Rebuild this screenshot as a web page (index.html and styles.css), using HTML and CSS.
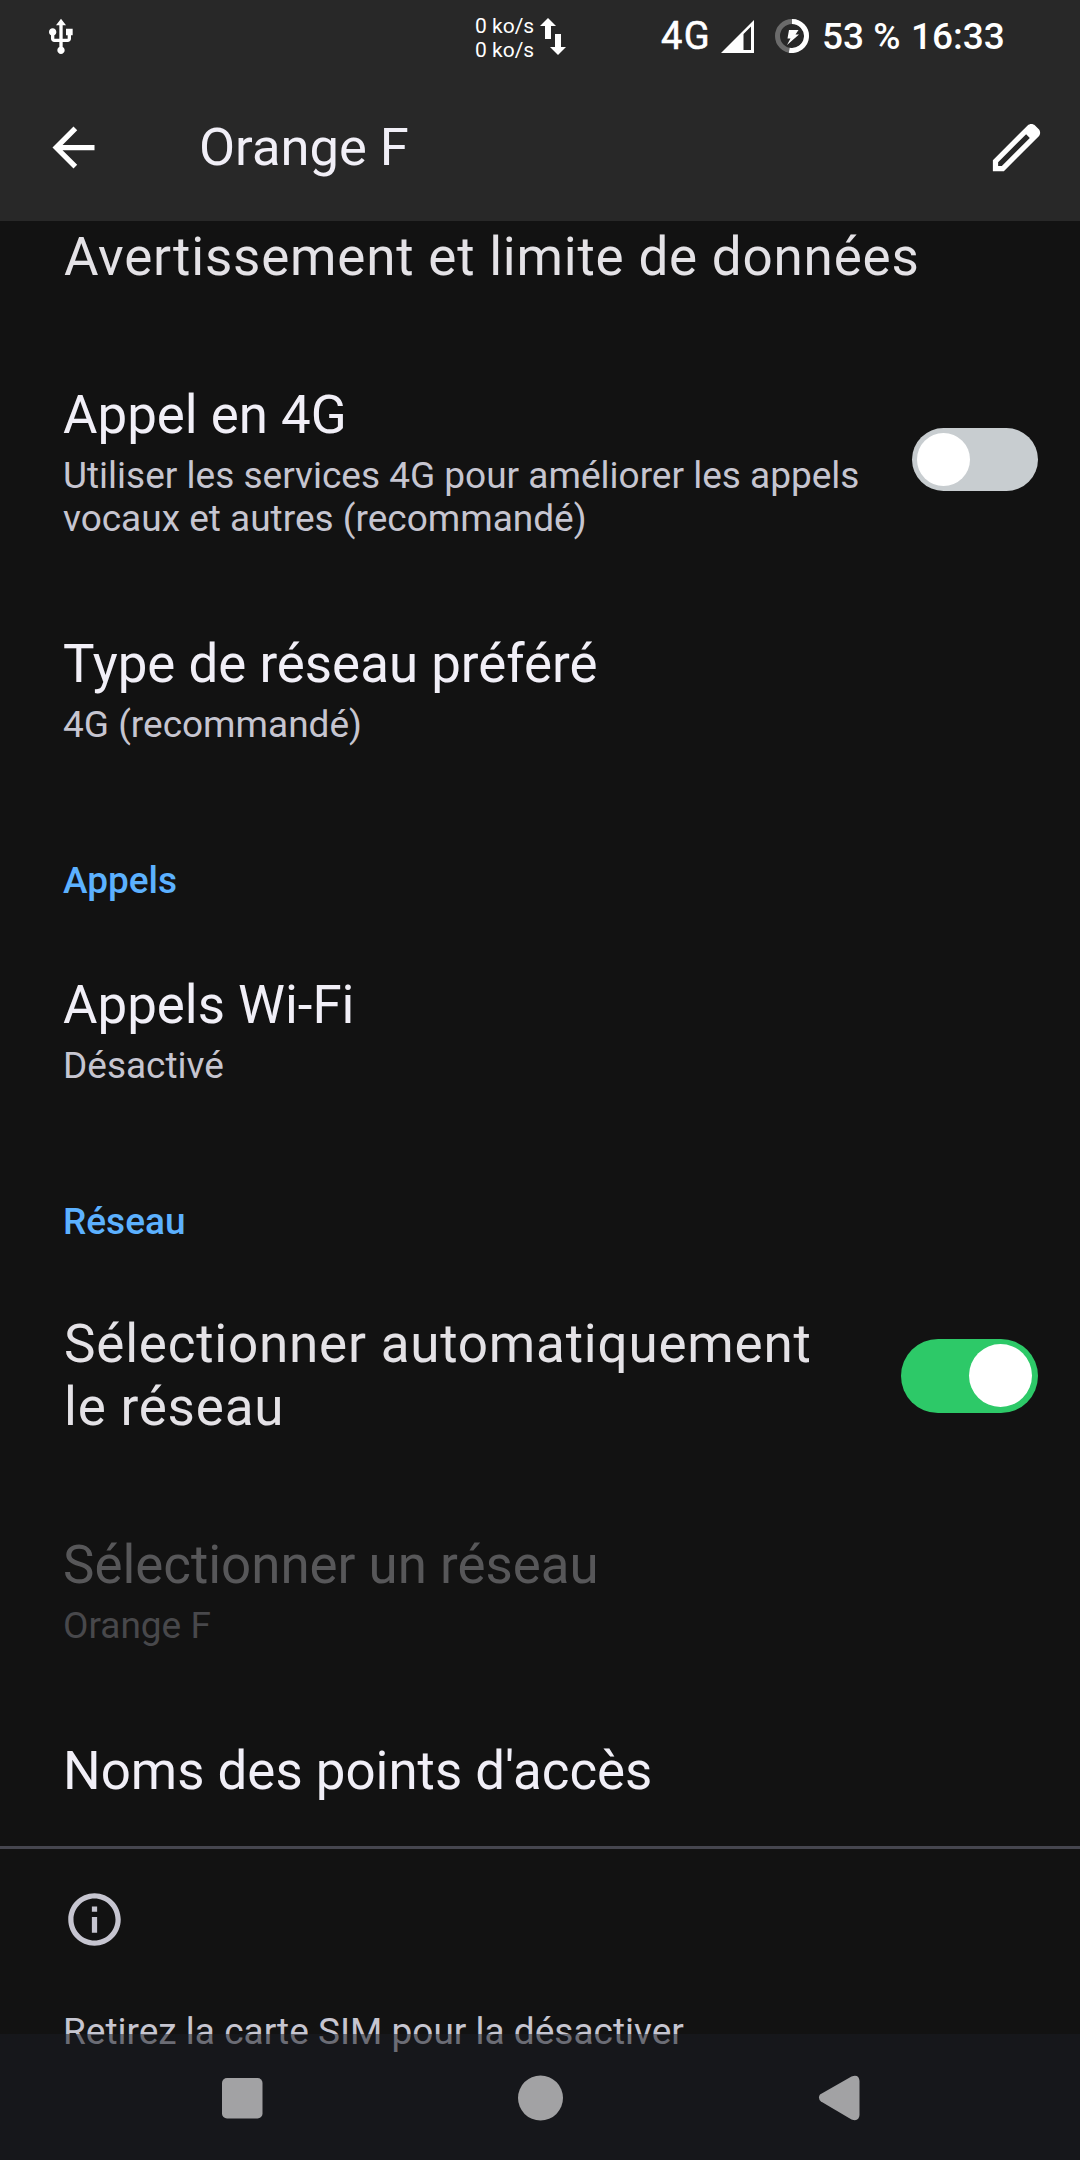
FILE: index.html
```html
<!DOCTYPE html>
<html lang="fr">
<head>
<meta charset="utf-8">
<title>Orange F</title>
<link rel="stylesheet" href="styles.css">
</head>
<body>
<div class="screen">
  <header class="header">
    <div class="status">
      <svg class="usb" viewBox="0 0 24 24"><path d="M15 7v4h1v2h-3V5h2l-3-4-3 4h2v8H8v-2.070c.7-.37 1.200-1.080 1.200-1.930 0-1.210-.99-2.200-2.200-2.200S4.800 7.790 4.800 9c0 .85.5 1.560 1.200 1.930V13c0 1.110.89 2 2 2h3v3.050c-.71.37-1.200 1.100-1.200 1.950 0 1.220.99 2.200 2.200 2.200s2.200-.98 2.200-2.200c0-.85-.49-1.580-1.200-1.950V15h3c1.110 0 2-.89 2-2v-2h1V7z"/></svg>
      <div class="traffic">
        <div class="rates"><span>0 ko/s</span><span>0 ko/s</span></div>
        <svg class="arrows" viewBox="0 0 26 37"><path d="M8 0l8 8h-5v13H5V8H0z"/><path d="M15 16h6v13h5l-8 8-8-8h5z"/></svg>
      </div>
      <span class="net">4G</span>
      <svg class="signal" viewBox="0 0 33 33"><path fill-rule="evenodd" d="M33 0v33H0zM22.500 14v16H30V6.500z"/></svg>
      <svg class="battery" viewBox="0 0 34 34"><circle cx="17" cy="17" r="14.500" fill="none" stroke="#6b6b6b" stroke-width="5"/><path d="M17 2.500a14.500 14.500 0 1 1-2.700 28.750" fill="none" stroke="#fff" stroke-width="5"/><path d="M14 11h9.500l-3 4.500h3.500L12 26l3.500-6.500h-3z"/></svg>
      <span class="percent">53 %</span>
      <span class="clock">16:33</span>
    </div>
    <div class="toolbar">
      <svg class="icon" viewBox="0 0 24 24"><path d="M20 11H7.830l5.590-5.590L12 4l-8 8 8 8 1.410-1.410L7.830 13H20z"/></svg>
      <h1 class="heading">Orange F</h1>
      <svg class="icon" viewBox="0 0 24 24"><path d="M20.410 4.940l-1.350-1.350c-.78-.78-2.050-.78-2.830 0L3 16.820V21h4.180L20.410 7.770c.79-.78.79-2.050 0-2.830zM6.410 19H5v-1.410L15.660 6.930l1.410 1.410z"/></svg>
    </div>
  </header>

  <main class="list">
    <div class="row row-first"><div class="text"><div class="title spaced">Avertissement et limite de données</div></div></div>
    <div class="row">
      <div class="text">
        <div class="title">Appel en 4G</div>
        <div class="summary">Utiliser les services 4G pour améliorer les appels vocaux et autres (recommandé)</div>
      </div>
      <div class="switch"><div class="knob"></div></div>
    </div>
    <div class="row"><div class="text"><div class="title">Type de réseau préféré</div><div class="summary">4G (recommandé)</div></div></div>
    <h2 class="category">Appels</h2>
    <div class="row"><div class="text"><div class="title">Appels Wi-Fi</div><div class="summary">Désactivé</div></div></div>
    <h2 class="category">Réseau</h2>
    <div class="row row-auto">
      <div class="text"><div class="title spaced">Sélectionner automatiquement le réseau</div></div>
      <div class="switch switch-on"><div class="knob"></div></div>
    </div>
    <div class="row disabled"><div class="text"><div class="title">Sélectionner un réseau</div><div class="summary">Orange F</div></div></div>
    <div class="row row-last"><div class="text"><div class="title">Noms des points d'accès</div></div></div>
    <div class="footer">
      <svg class="icon info" viewBox="0 0 24 24"><path d="M11 7h2v2h-2zm0 4h2v6h-2zm1-9C6.480 2 2 6.480 2 12s4.480 10 10 10 10-4.480 10-10S17.520 2 12 2zm0 18c-4.410 0-8-3.590-8-8s3.590-8 8-8 8 3.590 8 8-3.590 8-8 8z"/></svg>
      <div class="summary note">Retirez la carte SIM pour la désactiver</div>
    </div>
  </main>

  <nav class="nav">
    <svg viewBox="0 0 46 46"><rect x="3" y="3" width="40.500" height="40.500" rx="5"/></svg>
    <svg viewBox="0 0 46 46"><circle cx="22.500" cy="23" r="22.500"/></svg>
    <svg viewBox="0 0 46 46"><path d="M4 19.500L35.500 1.500Q43 -1 43.500 6V40Q43 47 35.500 44.500L5 26.500Q1.500 23 4 19.500z"/></svg>
  </nav>
</div>
</body>
</html>
```
FILE: styles.css
```css
* { box-sizing: border-box; margin: 0; }
body { background: #121212; font-family: Roboto, sans-serif; font-weight: 400; }
svg { display: block; flex: none; fill: #fff; }

.screen { position: relative; width: 1080px; height: 2160px; overflow: hidden; background: #121212; }

.header { height: 221px; background: #282828; color: #fff; }
.status { display: flex; align-items: flex-start; height: 74px; padding-left: 41px; font-size: 37px; font-weight: 500; line-height: 43px; white-space: nowrap; }
.usb { width: 40px; height: 40px; margin-top: 17px; }
.traffic { display: flex; width: 186px; margin-left: 394px; }
.rates { display: flex; flex-direction: column; width: 62px; padding-top: 14px; font-size: 21px; font-weight: 400; line-height: 24px; }
.arrows { width: 26px; height: 37px; margin: 18px 0 0 3px; }
.net { width: 60px; padding-top: 15px; font-size: 38px; font-weight: 400; letter-spacing: 1.5px; -webkit-text-stroke: 0.6px #fff; }
.signal { width: 33px; height: 33px; margin-top: 20px; }
.battery { width: 34px; height: 34px; margin: 19px 0 0 21px; }
.percent { width: 89px; margin-left: 13px; padding-top: 15px; }
.clock { padding-top: 15px; }

.toolbar { display: flex; align-items: flex-start; padding: 42px 32px 0 42px; }
.icon { width: 63px; height: 63px; }
.heading { flex: 1; margin-left: 94px; font-size: 52.5px; font-weight: 400; line-height: 62px; color: #f1eff7; }

.row { display: flex; align-items: center; justify-content: space-between; padding: 46px 42px 47px 63px; }
.row-first { padding: 5px 42px 50px 63px; }
.row-auto { padding-top: 44px; padding-bottom: 49px; }
.row-last { padding-bottom: 44px; }
.text { display: flex; flex-direction: column; gap: 8px; max-width: 807px; }
.row-first .text { max-width: none; }
.row-auto .text { max-width: 790px; }
.title { font-size: 52.85px; line-height: 62px; color: #f1eff7; }
.spaced { padding-left: 1px; font-size: 53px; letter-spacing: 0.78px; line-height: 63px; color: #e4e2e6; }
.row-first .spaced { line-height: 62px; }
.summary { font-size: 37px; line-height: 43px; color: #c6c5d0; }
.category { padding: 66px 63px 26px; font-size: 37px; font-weight: 500; line-height: 43px; color: #5cb1ff; }
.disabled .title { color: #575759; }
.disabled .summary { color: #48484b; }

.switch { display: flex; flex: none; width: 126px; height: 63px; margin-bottom: 6px; padding: 5px; border-radius: 32px; background: #c8cdd0; }
.knob { width: 53px; height: 53px; border-radius: 50%; background: #fff; }
.switch-on { justify-content: flex-end; width: 137px; height: 74px; margin-bottom: 0; padding: 5px 6px; border-radius: 37px; background: #2dc968; }
.switch-on .knob { width: 63px; height: 63px; }

.footer { padding: 39px 63px 0; border-top: 3px solid #46464f; }
.info { fill: #c6c5d0; }
.note { margin-top: 59px; }

.nav { position: absolute; left: 0; bottom: 0; display: flex; justify-content: space-between; width: 1080px; height: 126px; padding: 41px 218px 0 219px; background: rgba(27, 29, 36, 0.53); }
.nav svg { width: 46px; height: 46px; fill: #a2a2a4; }
```
